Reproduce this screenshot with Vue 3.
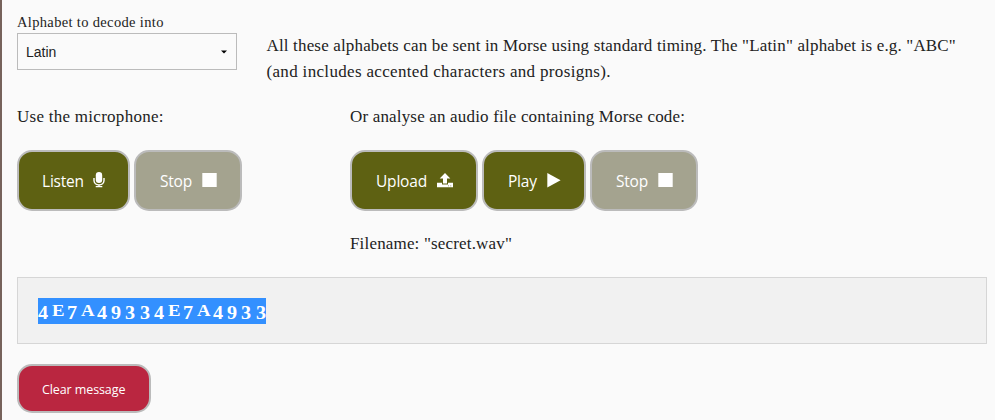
<script setup>
import { ref } from 'vue'

const alphabet = ref('Latin')
const filename = ref('secret.wav')
const message = ref('4E7A49334E7A4933')

const isDigit = (c) => c >= '0' && c <= '9'
</script>

<template>
  <main class="page">
    <section class="alphabet-row">
      <div class="field">
        <label class="field-label">Alphabet to decode into</label>
        <div class="select" role="combobox" tabindex="0">
          <span>{{ alphabet }}</span>
          <svg class="caret" viewBox="0 0 6 4"><path d="M0 0.5h6L3 3.5z" /></svg>
        </div>
      </div>
      <p class="hint">
        <span class="hint-first">All these alphabets can be sent in Morse using standard timing. The "Latin" alphabet is e.g. "ABC"</span><br />
        <span class="hint-second">(and includes accented characters and prosigns).</span>
      </p>
    </section>

    <section class="sources">
      <div class="source">
        <p class="text mic-text">Use the microphone:</p>
        <div class="buttons">
          <button class="btn listen">
            <span>Listen</span>
            <svg class="icon mic" viewBox="0 0 12 16">
              <rect x="2.8" y="0" width="6.4" height="11" rx="3.2" fill="#fff" />
              <path d="M1 6v2.5a5 4.4 0 0 0 10 0V6M6 12.5v2.2M2.7 14.6h6.6" fill="none" stroke="#fff" stroke-width="1.4" />
            </svg>
          </button>
          <button class="btn stop" disabled>
            <span>Stop</span>
            <svg class="icon square" viewBox="0 0 15 15"><path d="M0.3 0h14.4v14H0.3z" fill="#fff" /></svg>
          </button>
        </div>
      </div>
      <div class="source">
        <p class="text audio-text">Or analyse an audio file containing Morse code:</p>
        <div class="buttons">
          <button class="btn upload">
            <span>Upload</span>
            <svg class="icon tray" viewBox="0 0 16 15">
              <path d="M8 0l5.3 5.4H10v5H6v-5H2.7z" fill="#fff" />
              <path d="M0 9.8h5v1.6h6V9.8h5v4.4H0zM11 12.4v.8h.8v-.8zM13.4 12.4v.8h.8v-.8z" fill="#fff" fill-rule="evenodd" />
            </svg>
          </button>
          <button class="btn play">
            <span>Play</span>
            <svg class="icon triangle" viewBox="0 0 14 15"><path d="M0.3 0L13.6 7.3L0.3 14.6z" fill="#fff" /></svg>
          </button>
          <button class="btn stop" disabled>
            <span>Stop</span>
            <svg class="icon square" viewBox="0 0 15 15"><path d="M0.3 0h14.4v14H0.3z" fill="#fff" /></svg>
          </button>
        </div>
        <p class="text filename">Filename: "{{ filename }}"</p>
      </div>
    </section>

    <div class="output">
      <div class="decoded">
        <span
          v-for="(c, i) in message"
          :key="i"
          class="char"
          :class="{ digit: isDigit(c), wide: c === 'A', last: i === message.length - 1 }"
        ><span class="glyph">{{ c }}</span></span>
      </div>
    </div>

    <button class="btn clear">Clear message</button>
  </main>
</template>

<style>
body {
  background: #fafafa;
}
</style>

<style scoped>
.page {
  box-sizing: border-box;
  height: 420px;
  padding: 12px 8px 0 15px;
  border-left: 2px solid #76625b;
  background: #fafafa;
  color: #222;
  font-family: Georgia, "Liberation Serif", serif;
  font-size: 17px;
  line-height: 26px;
  overflow: hidden;
}
p {
  margin: 0;
  white-space: nowrap;
}
.alphabet-row {
  display: flex;
  gap: 29.5px;
  height: 92px;
}
.field {
  width: 220px;
}
.field-label {
  display: block;
  height: 21px;
  font-size: 14.5px;
  line-height: 21px;
  letter-spacing: 0.34px;
  white-space: nowrap;
}
.select {
  display: flex;
  box-sizing: border-box;
  align-items: center;
  justify-content: space-between;
  height: 37px;
  padding: 0 9px 0 8px;
  border: 1px solid #bbb;
  font: 14px/20px "Liberation Sans", sans-serif;
}
.caret {
  width: 6px;
  height: 4px;
  fill: #000;
}
.hint {
  padding-top: 21px;
}
.hint-first {
  letter-spacing: 0.16px;
}
.hint-second {
  letter-spacing: 0.33px;
}
.sources {
  display: grid;
  grid-template-columns: 333px 1fr;
  height: 173px;
}
.mic-text {
  letter-spacing: 0.27px;
}
.audio-text,
.filename {
  letter-spacing: 0.17px;
}
.buttons {
  display: flex;
  gap: 4px;
  margin: 20px 0;
}
.btn {
  display: flex;
  box-sizing: border-box;
  align-items: center;
  height: 61px;
  margin: 0;
  padding: 1px 0 0 24px;
  border: 2px solid #bbb;
  border-radius: 15px;
  background: #5e6112;
  color: #fff;
  font: 15.5px/24px "Open Sans", "Noto Sans", sans-serif;
  letter-spacing: -0.2px;
  white-space: nowrap;
}
.listen {
  width: 113px;
  padding-left: 23px;
}
.stop {
  width: 108px;
  background: #a4a38f;
}
.upload {
  width: 128px;
}
.play {
  width: 104px;
}
.icon {
  flex: none;
  margin-left: auto;
}
.mic {
  width: 12px;
  height: 16px;
  margin-right: 23px;
  margin-bottom: 3px;
}
.square {
  width: 15px;
  height: 15px;
  margin-right: 23px;
  margin-bottom: 1px;
}
.tray {
  width: 16px;
  height: 15px;
  margin-right: 23px;
  margin-bottom: 2px;
}
.triangle {
  width: 14px;
  height: 15px;
  margin-right: 23px;
  margin-bottom: 2px;
}
.output {
  box-sizing: border-box;
  height: 67px;
  padding: 20px;
  border: 1px solid #d6d6d6;
  background: #f1f1f1;
}
.decoded {
  display: flex;
  width: 228px;
  height: 26px;
  background: #3390ff;
  color: #fff;
  font-size: 17px;
  font-weight: bold;
  line-height: 24px;
}
.char {
  flex: none;
  width: 14.5px;
  padding-top: 1px;
}
.glyph {
  display: inline-block;
  transform: scaleX(1.1);
  transform-origin: left;
}
.digit {
  width: 14.3px;
  padding-top: 3px;
  font-size: 18px;
}
.digit .glyph {
  transform: scaleX(1.12);
}
.wide {
  width: 15.7px;
}
.last {
  width: 11px;
}
.clear {
  width: 134px;
  height: 49px;
  margin-top: 20px;
  padding-top: 3px;
  padding-left: 23px;
  background: #ba2640;
  font-size: 12.5px;
  letter-spacing: -0.1px;
}
</style>
